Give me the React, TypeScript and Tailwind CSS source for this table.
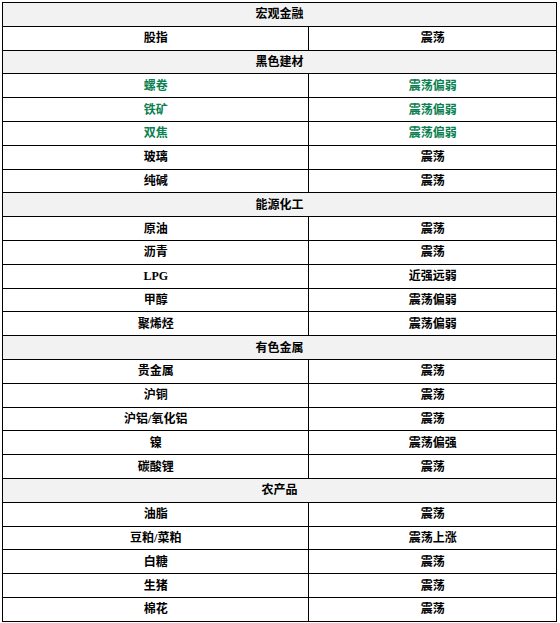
import React from 'react';

type Row = { name: string; view: string; green?: boolean };
type Section = { title: string; rows: Row[] };

const SECTIONS: Section[] = [
  { title: '宏观金融', rows: [{ name: '股指', view: '震荡' }] },
  {
    title: '黑色建材',
    rows: [
      { name: '螺卷', view: '震荡偏弱', green: true },
      { name: '铁矿', view: '震荡偏弱', green: true },
      { name: '双焦', view: '震荡偏弱', green: true },
      { name: '玻璃', view: '震荡' },
      { name: '纯碱', view: '震荡' },
    ],
  },
  {
    title: '能源化工',
    rows: [
      { name: '原油', view: '震荡' },
      { name: '沥青', view: '震荡' },
      { name: 'LPG', view: '近强远弱' },
      { name: '甲醇', view: '震荡偏弱' },
      { name: '聚烯烃', view: '震荡偏弱' },
    ],
  },
  {
    title: '有色金属',
    rows: [
      { name: '贵金属', view: '震荡' },
      { name: '沪铜', view: '震荡' },
      { name: '沪铝/氧化铝', view: '震荡' },
      { name: '镍', view: '震荡偏强' },
      { name: '碳酸锂', view: '震荡' },
    ],
  },
  {
    title: '农产品',
    rows: [
      { name: '油脂', view: '震荡' },
      { name: '豆粕/菜粕', view: '震荡上涨' },
      { name: '白糖', view: '震荡' },
      { name: '生猪', view: '震荡' },
      { name: '棉花', view: '震荡' },
    ],
  },
];

const App: React.FC = () => {
  return (
    <div
      className="w-[560px] h-[623px] bg-white pl-[2px] pt-[2px]"
      style={{ fontFamily: '"Liberation Serif", "Noto Sans CJK SC", serif' }}
    >
      <table className="w-[555px] border-collapse text-[12px] font-bold text-black">
        <colgroup>
          <col className="w-[307px]" />
          <col className="w-[248px]" />
        </colgroup>
        <tbody>
          {SECTIONS.map((s) => (
            <React.Fragment key={s.title}>
              <tr className="h-[23.8px]">
                <td colSpan={2} className="border border-black bg-[#f2f2f2] text-center p-0 leading-none">
                  {s.title}
                </td>
              </tr>
              {s.rows.map((r) => (
                <tr key={r.name} className="h-[23.8px]">
                  <td className={`border border-black text-center p-0 leading-none ${r.green ? 'text-[#0a7f50]' : ''}`}>
                    {r.name}
                  </td>
                  <td className={`border border-black text-center p-0 leading-none ${r.green ? 'text-[#0a7f50]' : ''}`}>
                    {r.view}
                  </td>
                </tr>
              ))}
            </React.Fragment>
          ))}
        </tbody>
      </table>
    </div>
  );
};

export default App;
